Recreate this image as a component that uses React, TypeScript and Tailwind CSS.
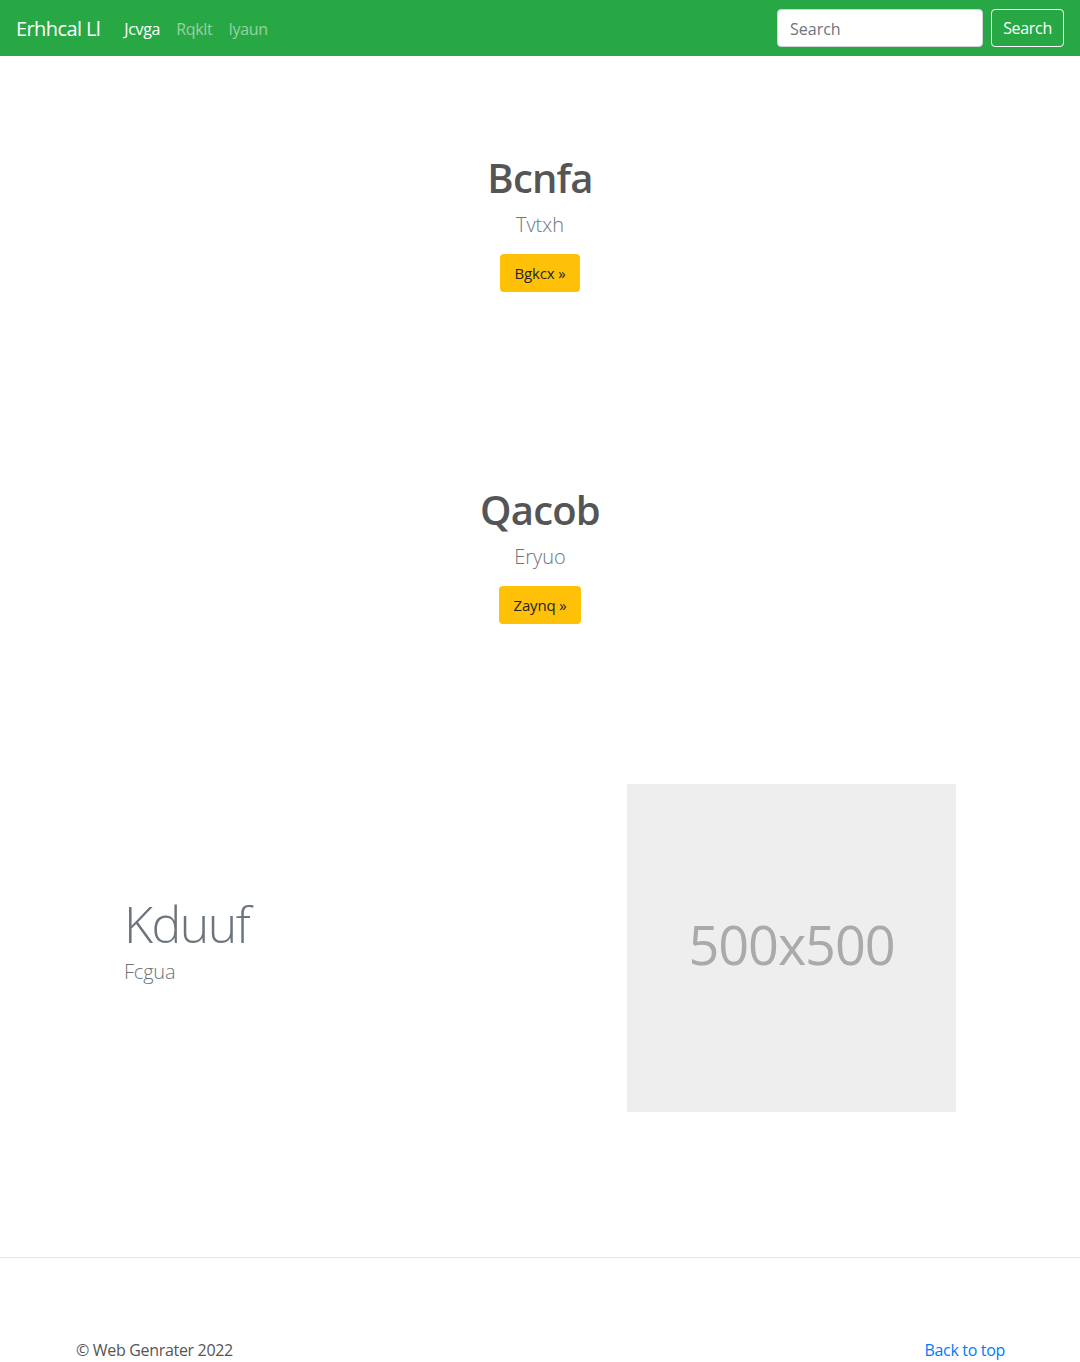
const App = () => {
  return (
    <div className="min-h-[1362px] bg-white font-['Open_Sans',sans-serif] text-[#212529]">
      {/* navbar */}
      <nav className="h-14 bg-[#28a745] flex items-center justify-between pl-4 pr-4">
        <div className="flex items-center pt-px">
          <span className="text-xl text-white mr-4 tracking-[-0.03em]">Erhhcal Ll</span>
          <ul className="flex items-center text-base tracking-[-0.02em]">
            <li className="px-2 text-white">Jcvga</li>
            <li className="px-2 text-white/50">Rqklt</li>
            <li className="px-2 text-white/50">Iyaun</li>
          </ul>
        </div>
        <form className="flex items-center">
          <input
            placeholder="Search"
            className="w-[206px] h-[38px] rounded bg-white border border-[#ced4da] px-3 pt-[2px] text-base text-[#495057] placeholder:text-[#6c757d] mr-2 outline-none"
          />
          <button
            type="button"
            className="h-[38px] w-[73px] rounded border border-white text-white text-base tracking-[-0.02em]"
          >
            Search
          </button>
        </form>
      </nav>

      {/* hero one */}
      <section className="pt-[98px] pb-[96px] text-center">
        <h1 className="text-[40px] leading-[48px] font-semibold text-[#555] tracking-[-0.02em]">Bcnfa</h1>
        <p className="mt-2 text-xl leading-[30px] font-light text-[#6c757d]">Tvtxh</p>
        <button className="mt-[14px] h-[38px] px-[14px] rounded bg-[#ffc107] text-[15px] text-[#212529] tracking-[-0.01em]">
          Bgkcx »
        </button>
      </section>

      {/* hero two */}
      <section className="pt-[98px] pb-[160px] text-center">
        <h1 className="text-[40px] leading-[48px] font-semibold text-[#555] tracking-[-0.02em]">Qacob</h1>
        <p className="mt-2 text-xl leading-[30px] font-light text-[#6c757d]">Eryuo</p>
        <button className="mt-[14px] h-[38px] px-[14px] rounded bg-[#ffc107] text-[15px] text-[#212529] tracking-[-0.01em]">
          Zaynq »
        </button>
      </section>

      {/* feature */}
      <section className="w-[960px] mx-auto px-[15px] pb-[145px]">
        <div className="grid grid-cols-2 items-center">
          <div className="pl-[49px] pb-4">
            <h2 className="text-[50px] leading-[62px] font-light text-[#6c757d] tracking-[-0.03em]">Kduuf</h2>
            <p className="mt-[2px] text-xl leading-[30px] font-light text-[#6c757d] tracking-[-0.01em]">Fcgua</p>
          </div>
          <div className="pl-[87px]">
            <div className="w-[329px] h-[328px] bg-[#eee] flex items-center justify-center">
              <span className="text-[54px] text-[#aaa] tracking-[-0.02em] pb-2">500x500</span>
            </div>
          </div>
        </div>
      </section>

      {/* footer */}
      <footer className="border-t border-[#e5e5e5]">
        <div className="w-[960px] mx-auto px-[15px] pt-[80px] flex justify-between text-base leading-6 tracking-[-0.02em]">
          <p className="text-[#555] pl-px">© Web Genrater 2022</p>
          <a href="#" className="text-[#007bff]">Back to top</a>
        </div>
      </footer>
    </div>
  );
};

export default App;
